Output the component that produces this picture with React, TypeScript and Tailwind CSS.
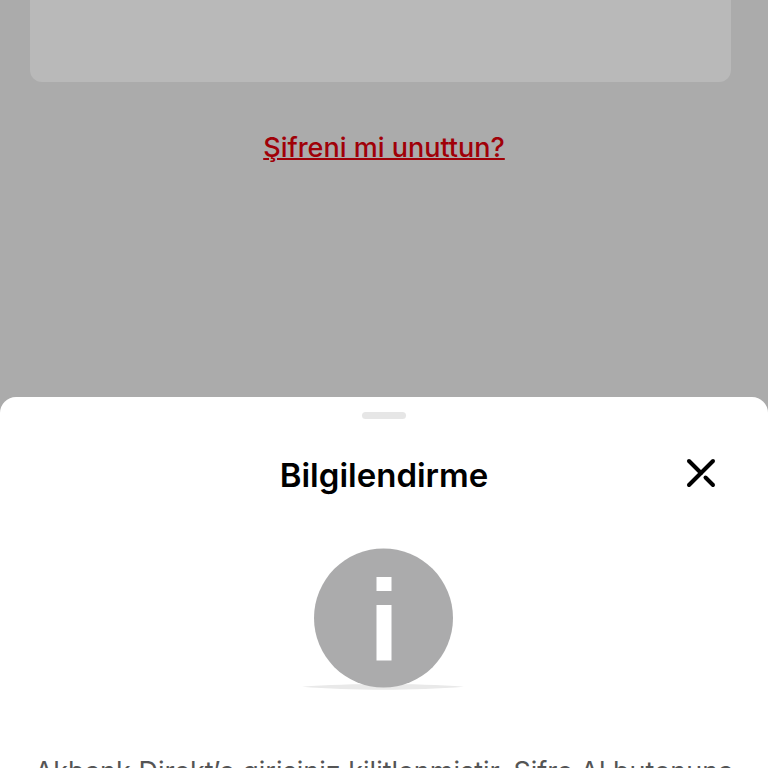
import React from 'react';

const InfoIcon: React.FC = () => (
  <svg width="164" height="144" viewBox="0 0 164 144" aria-hidden="true">
    <path d="M0 138.800C24 136.800 54 136 81 136s57 .8 81 2.800c-24 2-54 3-81 3s-57-1-81-3z" fill="#e9e9e9" />
    <circle cx="81.500" cy="70" r="69.500" fill="#ababac" />
    <rect x="74.500" y="29" width="15" height="14" fill="#fff" />
    <rect x="74.500" y="57" width="15" height="55.500" fill="#fff" />
  </svg>
);

const CloseIcon: React.FC = () => (
  <svg width="32" height="32" viewBox="0 0 32 32" fill="none" stroke="#000" strokeWidth="4" aria-hidden="true">
    <path d="M4 28L28 4" strokeLinecap="round" />
    <path d="M4 4L16 16" strokeLinecap="round" />
    <path d="M20.500 20.500L28 28" strokeLinecap="round" />
  </svg>
);

const App: React.FC = () => {
  return (
    <div className="flex h-screen flex-col overflow-hidden bg-[#ababab] font-['Inter',sans-serif]">
      <main className="flex h-[397px] shrink-0 flex-col items-center">
        <div className="w-full pr-[37px] pl-[30px]">
          <div className="h-[82px] rounded-b-xl bg-[#b9b9b9]" />
        </div>
        <a href="#" className="mt-12 text-[27px] leading-9 font-medium text-[#a00008] underline decoration-2 underline-offset-1">
          Şifreni mi unuttun?
        </a>
      </main>

      <section role="dialog" aria-labelledby="sheet-title" className="flex flex-1 flex-col items-center rounded-t-2xl bg-white">
        <div className="mt-[15px] h-[7px] w-11 shrink-0 rounded-sm bg-[#e6e6e6]" />
        <header className="mt-9 grid w-full grid-cols-[1fr_auto_1fr] items-start px-[51px]">
          <h2 id="sheet-title" className="col-start-2 text-[33px] leading-10 font-semibold text-black">
            Bilgilendirme
          </h2>
          <button type="button" aria-label="Kapat" className="mt-0.5 justify-self-end">
            <CloseIcon />
          </button>
        </header>
        <div className="mt-[53px] shrink-0">
          <InfoIcon />
        </div>
        <p className="mt-[62px] text-[27px] leading-9 whitespace-nowrap text-[#555]">
          Akbank Direkt’e girişiniz kilitlenmiştir. Şifre Al butonuna
        </p>
      </section>
    </div>
  );
};

export default App;
